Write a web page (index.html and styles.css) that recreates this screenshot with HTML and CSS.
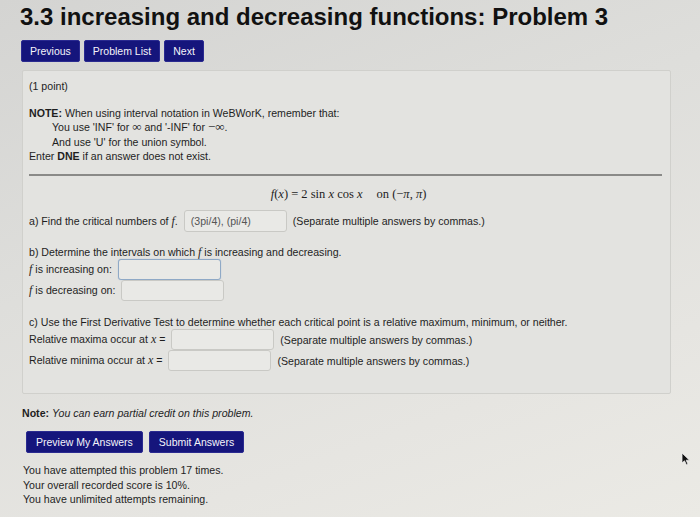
FILE: index.html
```html
<!DOCTYPE html>
<html lang="en">
<head>
<meta charset="utf-8">
<title>3.3 increasing and decreasing functions: Problem 3</title>
<link rel="stylesheet" href="styles.css">
</head>
<body>
<h1 class="title">3.3 increasing and decreasing functions: Problem 3</h1>
<nav class="nav">
  <span class="btn">Previous</span>
  <span class="btn">Problem List</span>
  <span class="btn">Next</span>
</nav>
<div class="panel">
  <div class="points">(1 point)</div>
  <div class="note">
    <div><b>NOTE:</b> When using interval notation in WeBWorK, remember that:</div>
    <div class="indent">You use 'INF' for <span class="m">∞</span> and '-INF' for <span class="m">−∞</span>.</div>
    <div class="indent">And use 'U' for the union symbol.</div>
    <div>Enter <b>DNE</b> if an answer does not exist.</div>
  </div>
  <div class="rule"></div>
  <div class="formula"><i>f</i>(<i>x</i>) = 2 sin <i>x</i> cos <i>x</i><span class="sp"></span>on (−<i>π</i>, <i>π</i>)</div>
  <div class="row row-a">
    <span>a) Find the critical numbers of <i class="mf">f</i>.</span>
    <span class="inp filled">(3pi/4), (pi/4)</span>
    <span>(Separate multiple answers by commas.)</span>
  </div>
  <div class="line line-b">b) Determine the intervals on which <i class="mf">f</i> is increasing and decreasing.</div>
  <div class="row">
    <span><i class="mf">f</i> is increasing on:</span>
    <span class="inp focus"></span>
  </div>
  <div class="row">
    <span><i class="mf">f</i> is decreasing on:</span>
    <span class="inp"></span>
  </div>
  <div class="line line-c">c) Use the First Derivative Test to determine whether each critical point is a relative maximum, minimum, or neither.</div>
  <div class="row">
    <span>Relative maxima occur at <i class="mf">x</i> =</span>
    <span class="inp"></span>
    <span>(Separate multiple answers by commas.)</span>
  </div>
  <div class="row">
    <span>Relative minima occur at <i class="mf">x</i> =</span>
    <span class="inp"></span>
    <span>(Separate multiple answers by commas.)</span>
  </div>
</div>
<div class="credit"><b>Note:</b> <i>You can earn partial credit on this problem.</i></div>
<div class="actions">
  <span class="btn big">Preview My Answers</span>
  <span class="btn big">Submit Answers</span>
</div>
<div class="status">
  <div>You have attempted this problem 17 times.</div>
  <div>Your overall recorded score is 10%.</div>
  <div>You have unlimited attempts remaining.</div>
</div>
<svg class="cursor" width="10" height="14" viewBox="0 0 10 14"><path d="M1 1 L1 11 L3.5 8.8 L5.5 13 L7 12.3 L5.2 8.2 L8.5 8.2 Z" fill="#111" stroke="#eee" stroke-width="0.8"/></svg>
</body>
</html>
```
FILE: styles.css
```css
html, body {
  margin: 0;
  padding: 0;
}
body {
  width: 700px;
  height: 517px;
  overflow: hidden;
  position: relative;
  background: linear-gradient(160deg, #d4d4d2 0%, #dededb 40%, #e6e5e1 75%, #ebeae5 100%);
  font-family: "Liberation Sans", Arial, sans-serif;
  font-size: 10.6px;
  color: #1e1e1e;
}
.title {
  margin: 0;
  padding: 3px 0 0 20px;
  font-size: 24px;
  line-height: 28px;
  font-weight: bold;
  color: #111;
}
.nav {
  display: flex;
  gap: 4px;
  margin: 9px 0 0 21px;
}
.btn {
  display: inline-flex;
  align-items: center;
  height: 22px;
  padding: 0 8px;
  background: #15157c;
  color: #f4f4fa;
  border: 1px solid #2a2a90;
  border-radius: 2px;
  box-sizing: border-box;
  font-size: 10.5px;
}
.panel {
  margin: 8px 0 0 22px;
  width: 649px;
  height: 324px;
  box-sizing: border-box;
  padding: 8px 6px 0 6px;
  background: #e3e3e0;
  border: 1px solid #d0d0cc;
  border-radius: 2px;
}
.points {
  line-height: 14px;
}
.note {
  margin-top: 13px;
  line-height: 14.3px;
}
.indent {
  padding-left: 23px;
}
.m {
  font-family: "Liberation Serif", serif;
  font-size: 13px;
  line-height: 10px;
}
.rule {
  margin: 11px 2px 0 0;
  height: 2px;
  background: #8a8a88;
}
.formula {
  margin-top: 11px;
  line-height: 14px;
  text-align: center;
  font-family: "Liberation Serif", serif;
  font-size: 12.5px;
  padding-left: 4px;
}
.formula .sp {
  display: inline-block;
  width: 14px;
}
.mf {
  font-family: "Liberation Serif", serif;
  font-size: 12px;
}
.row {
  display: flex;
  align-items: center;
  gap: 6px;
  height: 21px;
  margin-top: 0;
}
.row-a {
  margin-top: 9px;
  height: 22px;
}
.inp {
  display: inline-flex;
  align-items: center;
  width: 103px;
  height: 100%;
  box-sizing: border-box;
  padding: 0 6px;
  background: #e9e9e6;
  border: 1px solid #c9c9c5;
  border-radius: 3px;
  color: #555;
}
.inp.focus {
  border-color: #8fa9c6;
  box-shadow: 0 0 1px #9db5d0;
}
.line {
  line-height: 14px;
}
.line-b {
  margin-top: 13px;
}
.line-c {
  margin-top: 15px;
  line-height: 13px;
}
.credit {
  margin: 12px 0 0 22px;
  line-height: 14px;
}
.actions {
  display: flex;
  gap: 6px;
  margin: 11px 0 0 26px;
}
.btn.big {
  padding: 0 9px;
}
.status {
  margin: 10px 0 0 23px;
  line-height: 14.5px;
}
.cursor {
  position: absolute;
  left: 681px;
  top: 452px;
}
```
